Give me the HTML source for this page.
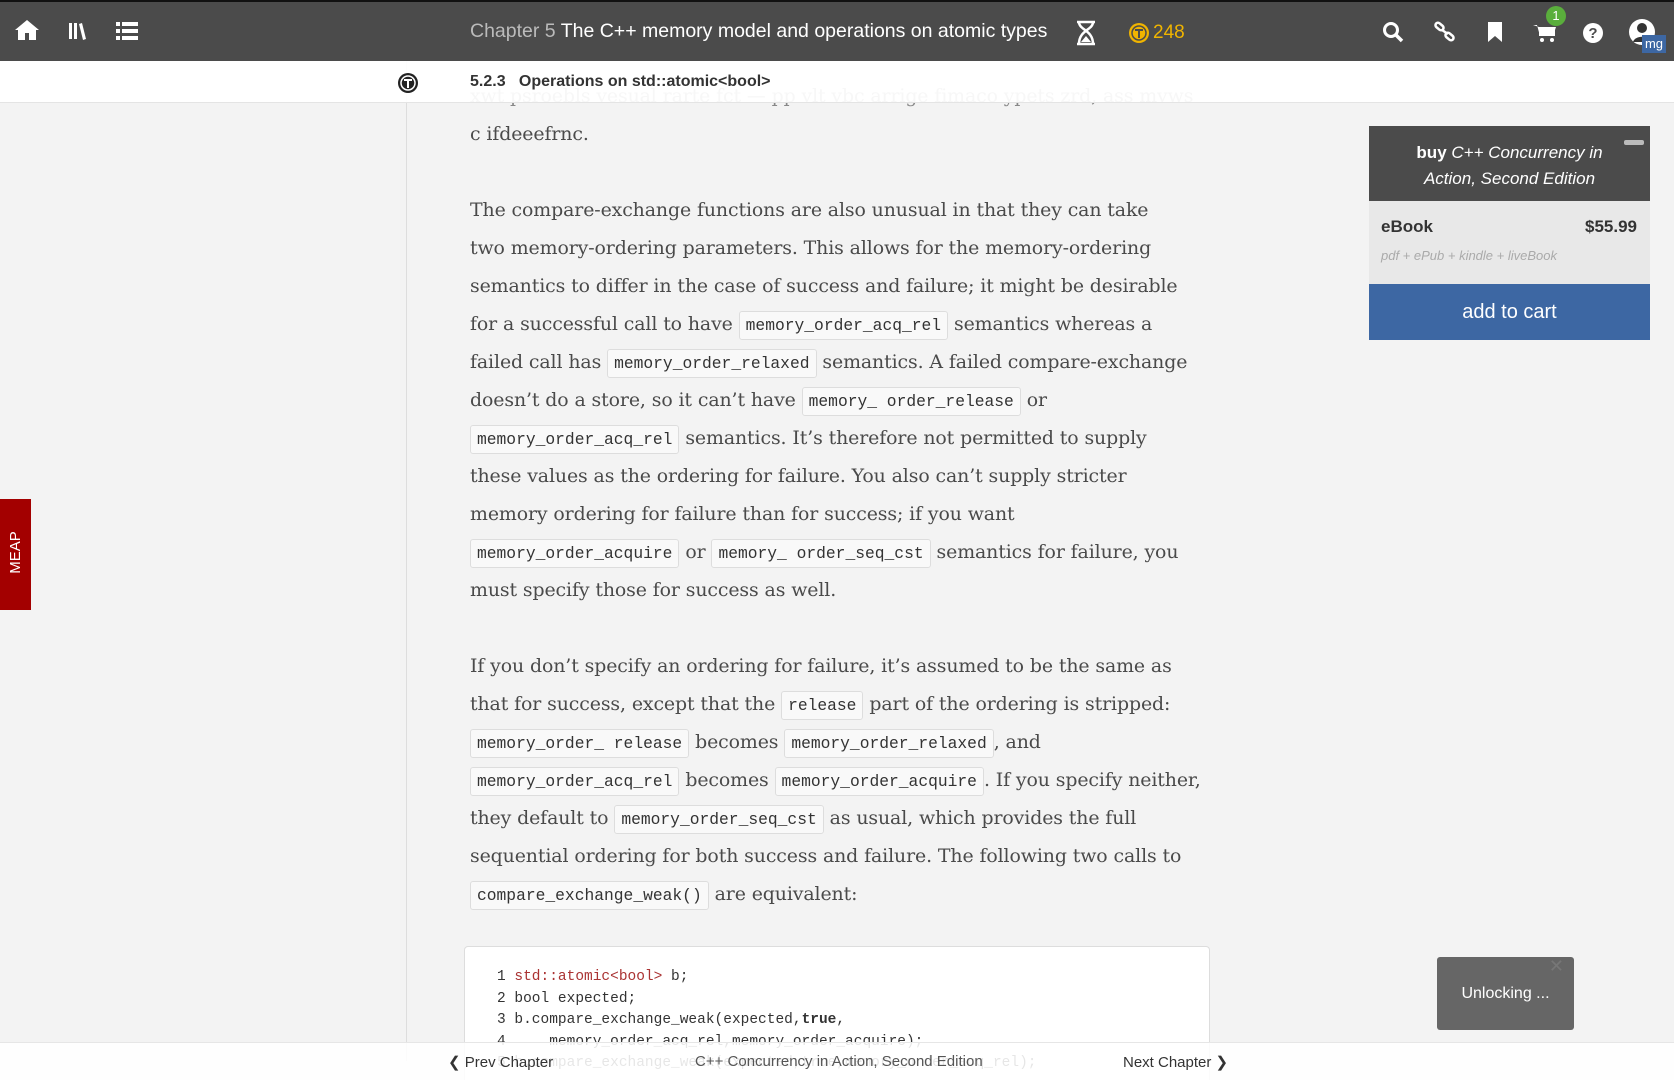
<!DOCTYPE html>
<html style="width:1674px;height:1080px;overflow:hidden"><head><meta charset="utf-8"><style>
*{margin:0;padding:0;box-sizing:border-box}
body{width:1674px;height:1080px;overflow:hidden;background:#f3f3f3;font-family:"Liberation Sans",sans-serif;position:relative}
.hdr{position:absolute;left:0;top:0;width:1674px;height:61px;background:#4b4b4b;border-top:2px solid #111}
.title{position:absolute;left:470px;top:18px;font-size:19.5px;color:#fff;white-space:nowrap}
.title span{color:#bbb}
.sub{position:absolute;left:0;top:61px;width:1674px;height:42px;background:rgba(255,255,255,.93);border-bottom:1px solid #e4e4e4;z-index:3}
.sub .t{position:absolute;left:470px;top:12px;font-size:16px;font-weight:bold;color:#333;white-space:nowrap}
.vline{position:absolute;left:406px;top:61px;width:1px;height:1000px;background:#ddd}
.txt{position:absolute;left:470px;top:77px;font-family:"DejaVu Serif",serif;font-size:18.9px;line-height:38px;color:#4a4a4a;white-space:nowrap;letter-spacing:-0.1px}
.txt div{height:38px}
code{font-family:"Liberation Mono",monospace;font-size:16.3px;color:#333;background:#f9f9f9;border:1px solid #ddd;border-radius:3px;padding:4px 6px;letter-spacing:0}
.card{position:absolute;left:1369px;top:126px;width:281px}
.ch{background:#4b4b4b;height:75px;color:#fff;text-align:center;font-size:17px;padding-top:14px;line-height:26px;position:relative}
.ch i{font-style:italic}
.cg{background:#e8e8e8;height:83px;position:relative}
.cb{background:#3d67a3;height:56px;color:#fff;font-size:20px;text-align:center;line-height:56px}
.meap{position:absolute;left:0;top:499px;width:31px;height:111px;background:#a30000}
.meap span{position:absolute;left:-12px;top:45px;transform:rotate(-90deg);color:#fff;font-size:15px;width:55px;text-align:center}
.code{position:absolute;left:464px;top:946px;width:746px;height:134px;background:#fff;border:1px solid #ddd;border-bottom:none;border-radius:4px 4px 0 0;overflow:hidden}
.code pre{position:absolute;left:32px;top:20px;font-family:"Liberation Mono",monospace;font-size:14.5px;line-height:21.5px;color:#333}
.foot{position:absolute;left:0;top:1042px;width:1674px;height:38px;background:rgba(255,255,255,.88);border-top:1px solid #e6e6e6;font-size:15px;color:#333}
.toast{position:absolute;left:1437px;top:957px;width:137px;height:73px;background:#666;border-radius:3px;color:#fff;font-size:16px;text-align:center;line-height:73px}
svg{position:absolute}
</style></head><body>
<div class="hdr">
<svg style="left:14px;top:16px" width="26" height="24" viewBox="0 0 26 24"><path d="M13 2L1 12h3v10h7v-7h4v7h7V12h3z" fill="#fff"/></svg>
<svg style="left:68px;top:19px" width="18" height="20" viewBox="0 0 18 20"><rect x="1" y="2" width="3" height="16" fill="#fff"/><rect x="6" y="2" width="3" height="16" fill="#fff"/><path d="M11 3l3-1 4 16-3 1z" fill="#fff"/></svg>
<svg style="left:116px;top:19px" width="22" height="20" viewBox="0 0 22 20"><g fill="#fff"><rect x="0" y="1" width="4" height="4"/><rect x="6" y="1" width="16" height="4"/><rect x="0" y="8" width="4" height="4"/><rect x="6" y="8" width="16" height="4"/><rect x="0" y="15" width="4" height="4"/><rect x="6" y="15" width="16" height="4"/></g></svg>
<div class="title"><span>Chapter 5</span> The C++ memory model and operations on atomic types</div>
<svg style="left:1075px;top:18px" width="22" height="26" viewBox="0 0 22 26"><path d="M2 2h18M2 24h18M4 2c0 8 14 8 14 22M18 2c0 8-14 8-14 22" stroke="#fff" stroke-width="2.5" fill="none"/><path d="M6 22l5-6 5 6z" fill="#fff"/></svg>
<svg style="left:1128px;top:20px" width="22" height="22" viewBox="0 0 22 22"><circle cx="11" cy="11" r="10" fill="#f0b400"/><circle cx="11" cy="11" r="7" fill="none" stroke="#4b4b4b" stroke-width="1.5"/><path d="M7 7h8v2h-3v7h-2V9H7z" fill="#4b4b4b"/></svg>
<div style="position:absolute;left:1153px;top:20px;font-size:19px;color:#f0b400">248</div>
<svg style="left:1382px;top:19px" width="22" height="22" viewBox="0 0 22 22"><circle cx="9" cy="9" r="6.5" stroke="#fff" stroke-width="3" fill="none"/><path d="M14 14l6 6" stroke="#fff" stroke-width="3.5"/></svg>
<svg style="left:1434px;top:19px" width="22" height="22" viewBox="0 0 22 22"><g stroke="#fff" stroke-width="2.5" fill="none"><rect x="1" y="3" width="9" height="5" rx="2.5" transform="rotate(40 5.5 5.5)"/><rect x="11" y="13" width="9" height="5" rx="2.5" transform="rotate(40 15.5 15.5)"/><path d="M8 9l6 4"/></g></svg>
<svg style="left:1487px;top:19px" width="16" height="22" viewBox="0 0 16 22"><path d="M1 1h14v20l-7-6-7 6z" fill="#fff"/></svg>
<svg style="left:1533px;top:21px" width="24" height="20" viewBox="0 0 24 20"><path d="M0 2h4l3 11h13l3-9H6" fill="#fff"/><rect x="6" y="4" width="16" height="9" fill="#fff"/><circle cx="9" cy="17" r="2" fill="#fff"/><circle cx="19" cy="17" r="2" fill="#fff"/></svg>
<div style="position:absolute;left:1546px;top:4px;width:20px;height:20px;border-radius:10px;background:#5aae3c;color:#fff;font-size:13px;text-align:center;line-height:20px">1</div>
<svg style="left:1582px;top:20px" width="22" height="22" viewBox="0 0 22 22"><circle cx="11" cy="11" r="10" fill="#fff"/><text x="11" y="16" text-anchor="middle" font-size="15" font-weight="bold" fill="#4b4b4b" font-family="Liberation Sans">?</text></svg>
<svg style="left:1628px;top:16px" width="28" height="28" viewBox="0 0 28 28"><circle cx="14" cy="14" r="13" fill="#fff"/><circle cx="14" cy="10" r="5" fill="#333"/><path d="M5 24c2-7 16-7 18 0z" fill="#333"/></svg>
<div style="position:absolute;left:1642px;top:33px;width:24px;height:18px;background:#3d67a3;color:#fff;font-size:13px;text-align:center;line-height:17px">mg</div>
</div>
<div class="vline"></div>
<div class="txt">
<div style="color:#888">xwt psroebls vesual rarte fct — pp vlt vbc arrige fimaco ypets zrd, ass mvws</div>
<div>c ifdeeefrnc.</div>
<div></div>
<div>The compare-exchange functions are also unusual in that they can take</div>
<div>two memory-ordering parameters. This allows for the memory-ordering</div>
<div>semantics to differ in the case of success and failure; it might be desirable</div>
<div>for a successful call to have <code>memory_order_acq_rel</code> semantics whereas a</div>
<div>failed call has <code>memory_order_relaxed</code> semantics. A failed compare-exchange</div>
<div>doesn’t do a store, so it can’t have <code>memory_ order_release</code> or</div>
<div><code>memory_order_acq_rel</code> semantics. It’s therefore not permitted to supply</div>
<div>these values as the ordering for failure. You also can’t supply stricter</div>
<div>memory ordering for failure than for success; if you want</div>
<div><code>memory_order_acquire</code> or <code>memory_ order_seq_cst</code> semantics for failure, you</div>
<div>must specify those for success as well.</div>
<div></div>
<div>If you don’t specify an ordering for failure, it’s assumed to be the same as</div>
<div>that for success, except that the <code>release</code> part of the ordering is stripped:</div>
<div><code>memory_order_ release</code> becomes <code>memory_order_relaxed</code>, and</div>
<div><code>memory_order_acq_rel</code> becomes <code>memory_order_acquire</code>. If you specify neither,</div>
<div>they default to <code>memory_order_seq_cst</code> as usual, which provides the full</div>
<div>sequential ordering for both success and failure. The following two calls to</div>
<div><code>compare_exchange_weak()</code> are equivalent:</div>
</div>
<div class="sub">
<svg style="left:397px;top:11px" width="22" height="22" viewBox="0 0 22 22"><circle cx="11" cy="11" r="10" fill="#222"/><circle cx="11" cy="11" r="7" fill="none" stroke="#fff" stroke-width="1.5"/><path d="M7 7h8v2h-3v7h-2V9H7z" fill="#fff"/></svg>
<div class="t">5.2.3 &nbsp; Operations on std::atomic&lt;bool&gt;</div>
</div>
<div class="card">
<div class="ch"><b>buy</b> <i>C++ Concurrency in</i><br><i>Action, Second Edition</i><div style="position:absolute;right:6px;top:14px;width:20px;height:5px;background:#bbb;border-radius:2px"></div></div>
<div class="cg"><div style="position:absolute;left:12px;top:16px;font-size:17px;font-weight:bold;color:#333">eBook</div><div style="position:absolute;right:13px;top:16px;font-size:17px;font-weight:bold;color:#333">$55.99</div><div style="position:absolute;left:12px;top:47px;font-size:13px;font-style:italic;color:#aaa">pdf + ePub + kindle + liveBook</div></div>
<div class="cb">add to cart</div>
</div>
<div class="meap"><span>MEAP</span></div>
<div class="code"><pre>1 <span style="color:#a33">std::atomic&lt;bool&gt;</span> b;
2 bool expected;
3 b.compare_exchange_weak(expected,<b>true</b>,
4     memory_order_acq_rel,memory_order_acquire);
5 b.compare_exchange_weak(expected,true,memory_order_acq_rel);</pre></div>
<div class="foot">
<div style="position:absolute;left:448px;top:10px">❮ Prev Chapter</div>
<div style="position:absolute;left:695px;top:10px;color:#555">C++ Concurrency in Action, Second Edition</div>
<div style="position:absolute;left:1123px;top:10px">Next Chapter ❯</div>
</div>
<div class="toast">Unlocking ...<span style="position:absolute;right:10px;top:-27px;color:#777;font-size:18px">✕</span></div>
</body></html>
